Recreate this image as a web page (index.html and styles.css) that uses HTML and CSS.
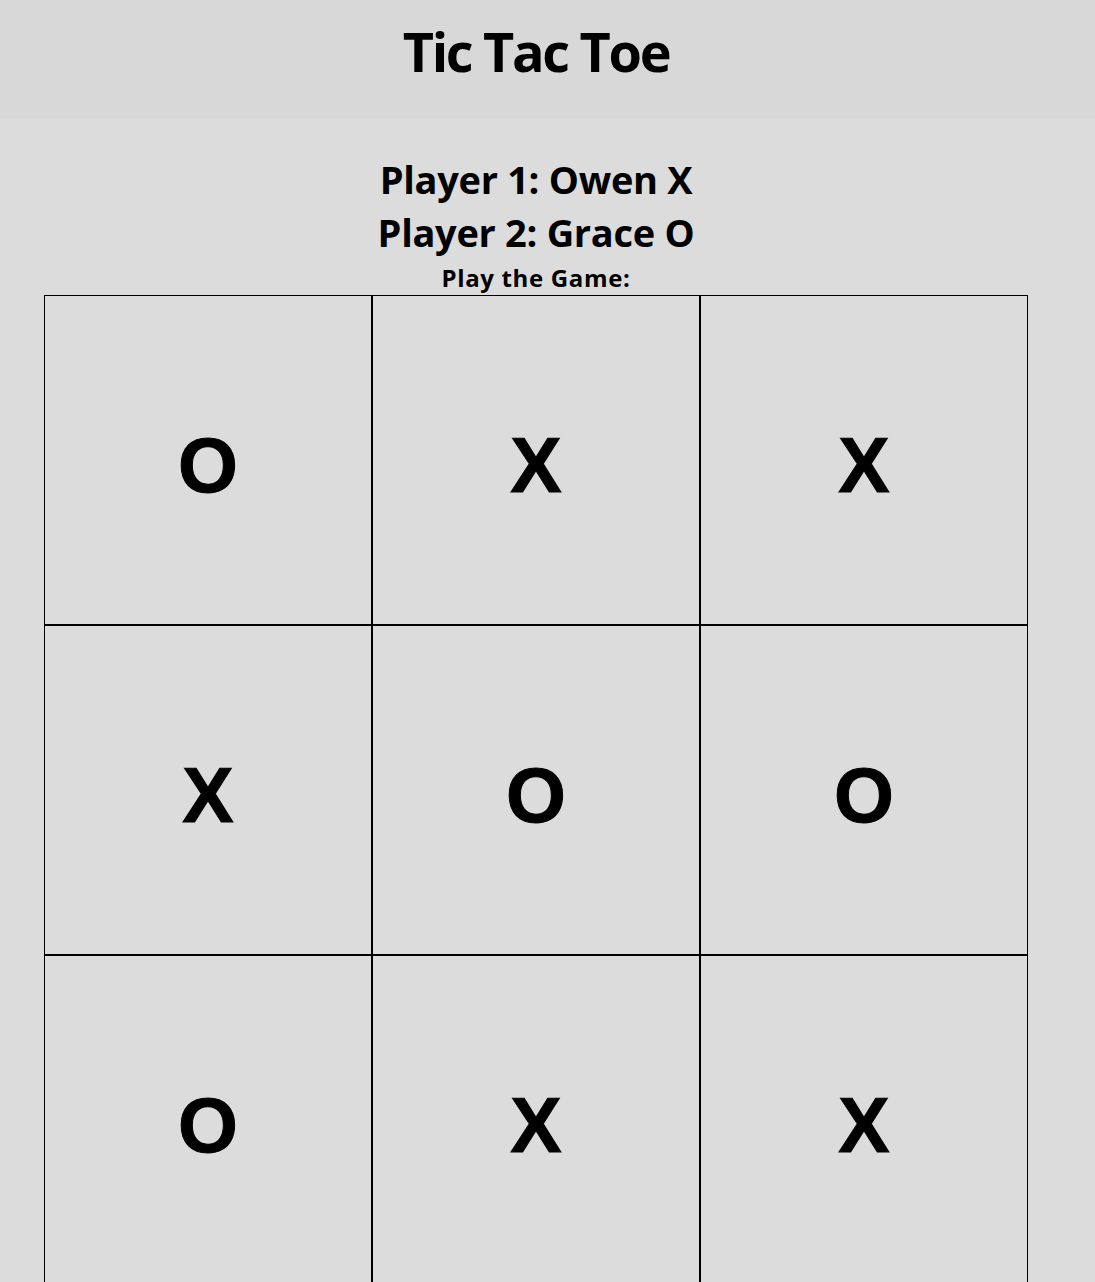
FILE: index.html
```html
<!DOCTYPE html>
<html lang="en">
<head>
<meta charset="utf-8">
<title>Tic Tac Toe</title>
<link rel="stylesheet" href="styles.css">
</head>
<body>
<header class="topbar">
  <div class="inner">
    <h1 class="title">Tic Tac Toe</h1>
  </div>
</header>
<main class="inner">
  <h2 class="player">Player 1: Owen X</h2>
  <h2 class="player">Player 2: Grace O</h2>
  <h3 class="prompt">Play the Game:</h3>
  <div class="board">
    <div class="cell">O</div>
    <div class="cell">X</div>
    <div class="cell">X</div>
    <div class="cell">X</div>
    <div class="cell">O</div>
    <div class="cell">O</div>
    <div class="cell">O</div>
    <div class="cell">X</div>
    <div class="cell">X</div>
  </div>
</main>
</body>
</html>
```

FILE: styles.css
```css
html, body {
  margin: 0;
  padding: 0;
}
body {
  background: #dcdcdc;
  color: #000;
  font-family: "Open Sans", "Noto Sans", sans-serif;
  overflow: hidden;
}
.inner {
  width: 1072px;
  text-align: center;
}
.topbar {
  background: #d8d8d8;
  height: 118px;
}
.title {
  margin: 0;
  padding-top: 14px;
  font-size: 54px;
  line-height: 74px;
  font-weight: 700;
  letter-spacing: -2.3px;
}
main.inner {
  padding-top: 35px;
}
.player {
  margin: 0;
  font-size: 38px;
  line-height: 53px;
  font-weight: 700;
  letter-spacing: -0.3px;
}
.prompt {
  margin: 0;
  padding-top: 2px;
  font-size: 24px;
  line-height: 34px;
  font-weight: 700;
  letter-spacing: 0.65px;
}
.board {
  width: 984px;
  margin: 0 auto;
  display: grid;
  grid-template-columns: repeat(3, 328px);
  grid-template-rows: repeat(3, 330px);
}
.cell {
  box-sizing: border-box;
  border: 1px solid #000;
  font-family: "Liberation Sans", Arial, sans-serif;
  font-weight: 700;
  font-size: 77px;
  line-height: 77px;
  padding-top: 131px;
  text-align: center;
  -webkit-text-stroke: 1px #000;
}
```
